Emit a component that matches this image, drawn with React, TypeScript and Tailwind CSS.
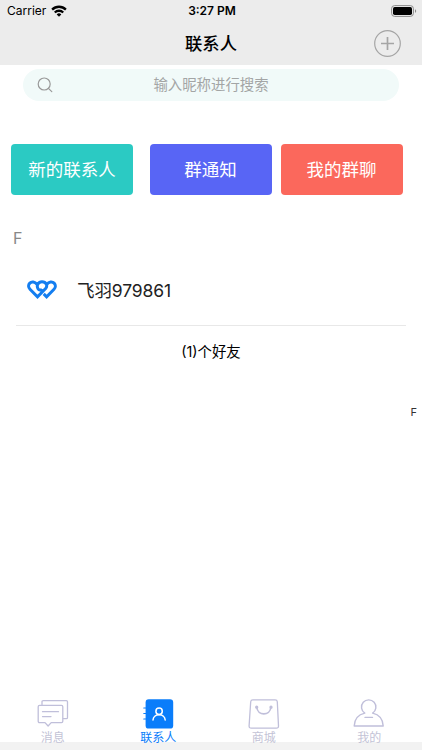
import type { ReactNode } from 'react';
import clsx from 'clsx';

const actions = [
  { label: '新的联系人', className: 'bg-[#2bcac3] mr-[16.5px]' },
  { label: '群通知', className: 'bg-[#5865f5] mr-[9px]' },
  { label: '我的群聊', className: 'bg-[#fb685c]' },
];

const contacts = [{ name: '飞羽979861' }];

function WifiIcon() {
  return (
    <svg className="w-4 h-3" viewBox="0 0 16 12">
      <g fill="none" stroke="#000" strokeWidth="2.3">
        <path d="M1.1 4.6a9.8 9.8 0 0 1 13.8 0" />
        <path d="M3.8 7.5a5.9 5.9 0 0 1 8.4 0" />
      </g>
      <path d="M8 11.7 5.7 9.4a3.3 3.3 0 0 1 4.6 0Z" />
    </svg>
  );
}

function BatteryIcon() {
  return (
    <svg className="w-[26px] h-3" viewBox="0 0 26 12">
      <rect x="0.6" y="0.6" width="21.8" height="10.8" rx="3" fill="none" stroke="#8a8a8a" />
      <rect x="2" y="2" width="19" height="8" rx="1.7" />
      <path d="M24 4.2c1.6.5 1.6 3.1 0 3.6Z" fill="#8a8a8a" />
    </svg>
  );
}

function HeartsLogo() {
  return (
    <svg className="w-[30px] h-5" viewBox="0 0 30 20" fill="none" stroke="#147ef0" strokeWidth="3">
      <path d="M10 4.4C7.8 1.5 4.6 1.2 2.8 3.1 1 5 1.3 7.6 3 9.3l7.5 7.5 8.1-8.2c2.4-2.8.6-6.9-3.6-6.9-3.8 0-5.8 4-4 7 .9 1.5 3.2 2 4.2.3" />
      <path d="M19.8 4.4c2.2-2.9 5.5-3.2 7.3-1.3s1.6 4.5-.1 6.2l-7.4 7.5-2.9-2.9" />
    </svg>
  );
}

function MessagesIcon() {
  return (
    <svg className="w-8 h-[30px]" viewBox="0 0 32 30" fill="none" stroke="#c0bfda" strokeWidth="1.3" strokeLinejoin="round" strokeLinecap="round">
      <path d="M5 5.5V2.8q0-1.2 1.2-1.2h23.1q1.2 0 1.2 1.2v15.6q0 1.2-1.2 1.2h-3" />
      <path d="M2.5 6.4h22q1.3 0 1.3 1.3v14.6q0 1.3-1.3 1.3H14.2L11.1 27 8 23.6H2.5q-1.3 0-1.3-1.3V7.7q0-1.3 1.3-1.3Z" />
      <path d="M5.5 12.7h16M5.5 17.6H14" />
    </svg>
  );
}

function ContactsIcon() {
  return (
    <svg className="w-8 h-[30px]" viewBox="0 0 32 30" fill="none" strokeLinecap="round">
      <rect x="3.6" y="0.2" width="27.6" height="29.4" rx="3.2" fill="#0a7dfa" />
      <path d="M1.8 9h2M1.8 14.5h2M1.8 20h2" stroke="#0a7dfa" strokeWidth="1.2" />
      <g stroke="#fff" strokeWidth="1.5">
        <circle cx="17.1" cy="12.3" r="3.2" />
        <path d="M11 21c.5-7.1 11.7-7.1 12.2 0" />
      </g>
    </svg>
  );
}

function ShopIcon() {
  return (
    <svg className="w-8 h-[30px]" viewBox="0 0 32 30" fill="none" stroke="#c0bfda" strokeWidth="1.3">
      <path d="M4.8.8h22.4q1.9 0 2.1 1.9l1.2 24.2q.1 2.3-2.2 2.3H3.3q-2.3 0-2.2-2.3L2.7 2.7Q2.9.8 4.8.8Z" />
      <path d="M8.8 8.5c1 8.4 13 8.4 14.1 0" strokeWidth="1.7" />
      <circle cx="8.7" cy="8.2" r="1" fill="#c0bfda" />
      <circle cx="23" cy="8.2" r="1" fill="#c0bfda" />
    </svg>
  );
}

function ProfileIcon() {
  return (
    <svg className="w-8 h-[30px]" viewBox="0 0 32 30" fill="none" stroke="#c0bfda" strokeWidth="1.4" strokeLinejoin="round" strokeLinecap="round">
      <path d="M11.8 14.1a7.2 7.2 0 1 1 7.8 0c6.2 1.4 10.3 5.7 10.6 12.9H1.2c.3-7.2 4.4-11.5 10.6-12.9Z" />
      <path d="M12 18.4h7.5" />
    </svg>
  );
}

function Tab({ icon, label, active }: { icon: ReactNode; label: string; active?: boolean }) {
  return (
    <div className={clsx('flex-1 flex flex-col items-center text-xs leading-[17px]', active ? 'text-[#0a7dfa]' : 'text-[#c3c3d6]')}>
      {icon}
      <span>{label}</span>
    </div>
  );
}

export default function App() {
  return (
    <div className="relative flex flex-col w-full h-[750px] overflow-hidden bg-white text-black font-[Inter,'Noto_Sans_CJK_SC',sans-serif]">
      <header className="h-[65px] shrink-0 bg-[#ececec]">
        <div className="grid grid-cols-3 items-center h-[22px] pl-[7px] pr-[5px] text-[12px]">
          <div className="flex items-center gap-[5px]">
            <span>Carrier</span>
            <WifiIcon />
          </div>
          <span className="text-center font-semibold">3:27 PM</span>
          <div className="flex justify-end">
            <BatteryIcon />
          </div>
        </div>
        <div className="grid grid-cols-3 items-center h-[43px] pr-[21px] pl-[21px]">
          <span />
          <h1 className="text-center text-[17.3px] font-medium leading-6">联系人</h1>
          <button className="justify-self-end">
            <svg className="w-[27px] h-[27px]" viewBox="0 0 27 27" fill="none" stroke="#a5a5a5">
              <circle cx="13.5" cy="13.5" r="12.8" strokeWidth="1.2" />
              <path d="M13.5 7v13M7 13.5h13" strokeWidth="1.7" />
            </svg>
          </button>
        </div>
      </header>

      <div className="flex items-center h-8 shrink-0 mt-[4px] ml-[23px] mr-[23px] pl-[14px] pr-[30px] rounded-full bg-[#f1faf9]">
        <svg className="w-4 h-4" viewBox="0 0 16 16" fill="none" stroke="#999" strokeWidth="1.2">
          <circle cx="7.2" cy="7" r="6" />
          <path d="m11.4 11.3 3.4 3.4" strokeLinecap="round" />
        </svg>
        <span className="flex-1 text-center text-[14.4px] text-[#a3a5a5]">输入昵称进行搜索</span>
      </div>

      <div className="flex mt-[43px] ml-[11px]">
        {actions.map((action) => (
          <button key={action.label} className={clsx('w-[122px] h-[51px] pt-[2px] rounded-[4px] text-[17.5px] text-white', action.className)}>
            {action.label}
          </button>
        ))}
      </div>

      <div className="mt-[30px] ml-[13px] text-base leading-[26px] text-[#888]">F</div>
      {contacts.map((contact) => (
        <div key={contact.name} className="flex items-center h-[75px] ml-4 mr-4 pt-[4px] pl-[11px] border-b border-[#e8e8e8]">
          <HeartsLogo />
          <span className="ml-5 mt-[3px] text-[17.5px] tracking-[-0.1px] text-[#222]">{contact.name}</span>
        </div>
      ))}
      <div className="mt-4 text-center text-[14.4px] leading-5">({contacts.length})个好友</div>

      <div className="absolute right-[5px] top-[405px] text-[11px] leading-[15px] text-[#333]">F</div>

      <nav className="mt-auto h-[51px] flex shrink-0 bg-[linear-gradient(#fff_43px,#f2f2f2_43px)]">
        <Tab icon={<MessagesIcon />} label="消息" />
        <Tab icon={<ContactsIcon />} label="联系人" active />
        <Tab icon={<ShopIcon />} label="商城" />
        <Tab icon={<ProfileIcon />} label="我的" />
      </nav>
    </div>
  );
}
